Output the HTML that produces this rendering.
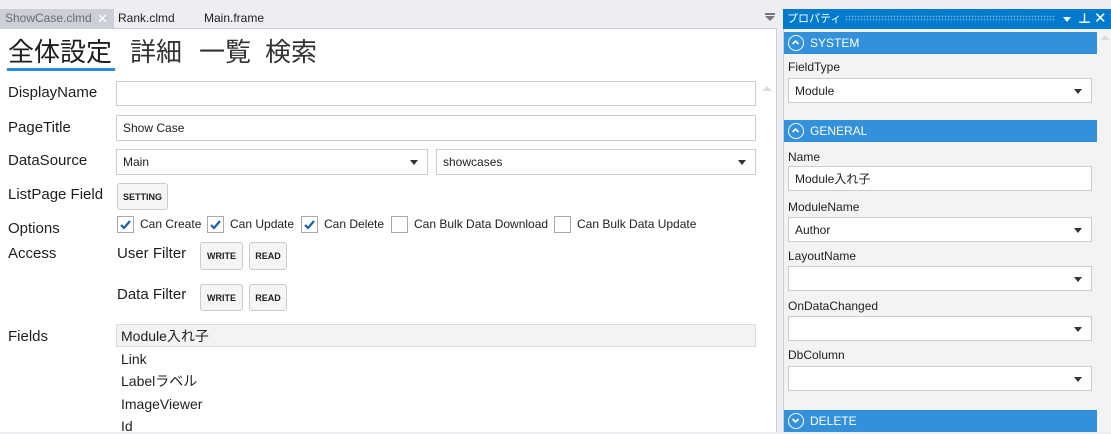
<!DOCTYPE html>
<html><head><meta charset="utf-8"><style>
*{box-sizing:border-box;margin:0;padding:0}
body{width:1111px;height:432px;overflow:hidden;background:#eeeef2;font-family:"Liberation Sans","Noto Sans CJK JP",sans-serif;position:relative;color:#1e1e1e}
.a{position:absolute;white-space:nowrap}
.lbl{position:absolute;font-size:15px;line-height:18px;white-space:nowrap}
.inp{position:absolute;background:#fff;border:1px solid #ccc;font-size:12px;padding-left:6px;display:flex;align-items:center}
.sel::after{content:"";position:absolute;right:9px;top:50%;margin-top:-2px;border-left:4px solid transparent;border-right:4px solid transparent;border-top:5px solid #333}
.btn{position:absolute;background:#f5f5f5;border:1px solid #ccc;border-radius:3px;font-size:9px;font-weight:bold;display:flex;align-items:center;justify-content:center}
.cb{position:absolute;width:17px;height:17px;border:1px solid #aaa;background:#fff}
.cbt{position:absolute;font-size:12px;line-height:17px;white-space:nowrap}
.hd{position:absolute;left:784px;width:313px;height:22px;background:#3391db;color:#fff;font-size:12px;line-height:22px;padding-left:26px}
.hd i{position:absolute;left:4px;top:3px;width:16px;height:16px;border:1.5px solid #fff;border-radius:50%}
.pl{position:absolute;left:788px;font-size:12px;line-height:14px}
.pi{position:absolute;left:788px;width:304px;height:25px;background:#fff;border:1px solid #ccc;font-size:12px;padding-left:6px;display:flex;align-items:center}
.fi{position:absolute;left:121px;font-size:14px;line-height:16px;white-space:nowrap}
</style></head><body>
<!-- tabs -->
<div class="a" style="left:0;top:9px;width:114px;height:19px;background:#ccced8;color:#6d6d6d;font-size:12px;line-height:19px;padding-left:5px">ShowCase.clmd</div>
<div class="a" style="left:97px;top:9px;color:#fff;font-size:13px;line-height:19px">✕</div>
<div class="a" style="left:118px;top:9px;font-size:12px;line-height:19px">Rank.clmd</div>
<div class="a" style="left:204px;top:9px;font-size:12px;line-height:19px">Main.frame</div>
<div class="a" style="left:765px;top:13px;width:10px;height:2px;background:#777"></div>
<div class="a" style="left:765px;top:16px;border-left:5px solid transparent;border-right:5px solid transparent;border-top:5px solid #777"></div>
<!-- editor -->
<div class="a" style="left:0;top:28px;width:777px;height:404px;background:#fff;border-top:1px solid #ccced8;border-right:1px solid #ccced8"></div>
<div class="a" style="left:8px;top:34px;font-size:26px;line-height:36px;color:#1e1e1e">全体設定</div>
<div class="a" style="left:130px;top:34px;font-size:26px;line-height:36px;color:#333">詳細</div>
<div class="a" style="left:199px;top:34px;font-size:26px;line-height:36px;color:#333">一覧</div>
<div class="a" style="left:265px;top:34px;font-size:26px;line-height:36px;color:#333">検索</div>
<div class="a" style="left:7px;top:68px;width:108px;height:3px;background:#2f8ad8"></div>
<div class="a" style="left:762px;top:86px;border-left:5px solid transparent;border-right:5px solid transparent;border-bottom:5px solid #ddd"></div>

<div class="lbl" style="left:8px;top:84px">DisplayName</div>
<div class="inp" style="left:116px;top:81px;width:640px;height:25px"></div>
<div class="lbl" style="left:8px;top:119px">PageTitle</div>
<div class="inp" style="left:116px;top:115px;width:640px;height:26px">Show Case</div>
<div class="lbl" style="left:8px;top:152px">DataSource</div>
<div class="inp sel" style="left:116px;top:149px;width:312px;height:26px">Main</div>
<div class="inp sel" style="left:436px;top:149px;width:320px;height:26px">showcases</div>
<div class="lbl" style="left:8px;top:186px">ListPage Field</div>
<div class="btn" style="left:117px;top:183px;width:51px;height:27px">SETTING</div>
<div class="lbl" style="left:8px;top:220px">Options</div>
<div class="cb" style="left:117px;top:216px"><svg width="15" height="15"><path d="M3 8l3 3 6-7" stroke="#1c5fa8" stroke-width="2.2" fill="none"/></svg></div>
<div class="cbt" style="left:140px;top:216px">Can Create</div>
<div class="cb" style="left:207px;top:216px"><svg width="15" height="15"><path d="M3 8l3 3 6-7" stroke="#1c5fa8" stroke-width="2.2" fill="none"/></svg></div>
<div class="cbt" style="left:230px;top:216px">Can Update</div>
<div class="cb" style="left:301px;top:216px"><svg width="15" height="15"><path d="M3 8l3 3 6-7" stroke="#1c5fa8" stroke-width="2.2" fill="none"/></svg></div>
<div class="cbt" style="left:324px;top:216px">Can Delete</div>
<div class="cb" style="left:391px;top:216px"></div>
<div class="cbt" style="left:414px;top:216px">Can Bulk Data Download</div>
<div class="cb" style="left:554px;top:216px"></div>
<div class="cbt" style="left:577px;top:216px">Can Bulk Data Update</div>
<div class="lbl" style="left:8px;top:245px">Access</div>
<div class="lbl" style="left:117px;top:245px">User Filter</div>
<div class="btn" style="left:200px;top:242px;width:43px;height:28px">WRITE</div>
<div class="btn" style="left:249px;top:242px;width:38px;height:28px">READ</div>
<div class="lbl" style="left:117px;top:286px">Data Filter</div>
<div class="btn" style="left:200px;top:284px;width:43px;height:27px">WRITE</div>
<div class="btn" style="left:249px;top:284px;width:38px;height:27px">READ</div>
<div class="lbl" style="left:8px;top:328px">Fields</div>
<div class="a" style="left:116px;top:324px;width:640px;height:23px;background:#f3f3f3;border:1px solid #ddd"></div>
<div class="fi" style="left:121px;top:328px">Module入れ子</div>
<div class="fi" style="top:351px">Link</div>
<div class="fi" style="top:373px">Labelラベル</div>
<div class="fi" style="top:396px">ImageViewer</div>
<div class="fi" style="top:418px">Id</div>

<!-- properties -->
<div class="a" style="left:783px;top:9px;width:328px;height:20px;background:#007acc;color:#fff;font-size:11px;line-height:20px;padding-left:4px">プロパティ</div>
<div class="a" style="left:845px;top:15px;width:210px;height:7px;background-image:radial-gradient(#5aa6de 0.8px,transparent 1px);background-size:3px 3px"></div>
<div class="a" style="left:1063px;top:17px;border-left:4px solid transparent;border-right:4px solid transparent;border-top:5px solid #fff"></div>
<div class="a" style="left:1078px;top:11px;color:#fff;font-size:13px;line-height:16px;font-weight:bold">⊥</div>
<div class="a" style="left:1094px;top:10px;color:#fff;font-size:15px;line-height:17px">✕</div>
<div class="a" style="left:783px;top:29px;width:328px;height:403px;background:#f3f3f3;border-left:1px solid #ccced8"></div>
<div class="a" style="left:1100px;top:35px;border-left:5px solid transparent;border-right:5px solid transparent;border-bottom:5px solid #ddd"></div>
<div class="hd" style="top:32px"><i><svg width="13" height="13" style="position:absolute;left:0;top:0"><path d="M3.5 8l3-3 3 3" stroke="#fff" stroke-width="1.6" fill="none"/></svg></i>SYSTEM</div>
<div class="pl" style="top:60px">FieldType</div>
<div class="pi sel" style="top:78px">Module</div>
<div class="hd" style="top:120px"><i><svg width="13" height="13" style="position:absolute;left:0;top:0"><path d="M3.5 8l3-3 3 3" stroke="#fff" stroke-width="1.6" fill="none"/></svg></i>GENERAL</div>
<div class="pl" style="top:150px">Name</div>
<div class="pi" style="top:166px">Module入れ子</div>
<div class="pl" style="top:200px">ModuleName</div>
<div class="pi sel" style="top:217px">Author</div>
<div class="pl" style="top:249px">LayoutName</div>
<div class="pi sel" style="top:266px"></div>
<div class="pl" style="top:299px">OnDataChanged</div>
<div class="pi sel" style="top:316px"></div>
<div class="pl" style="top:348px">DbColumn</div>
<div class="pi sel" style="top:366px"></div>
<div class="hd" style="top:410px"><i><svg width="13" height="13" style="position:absolute;left:0;top:0"><path d="M3.5 5l3 3 3-3" stroke="#fff" stroke-width="1.6" fill="none"/></svg></i>DELETE</div>
</body></html>
